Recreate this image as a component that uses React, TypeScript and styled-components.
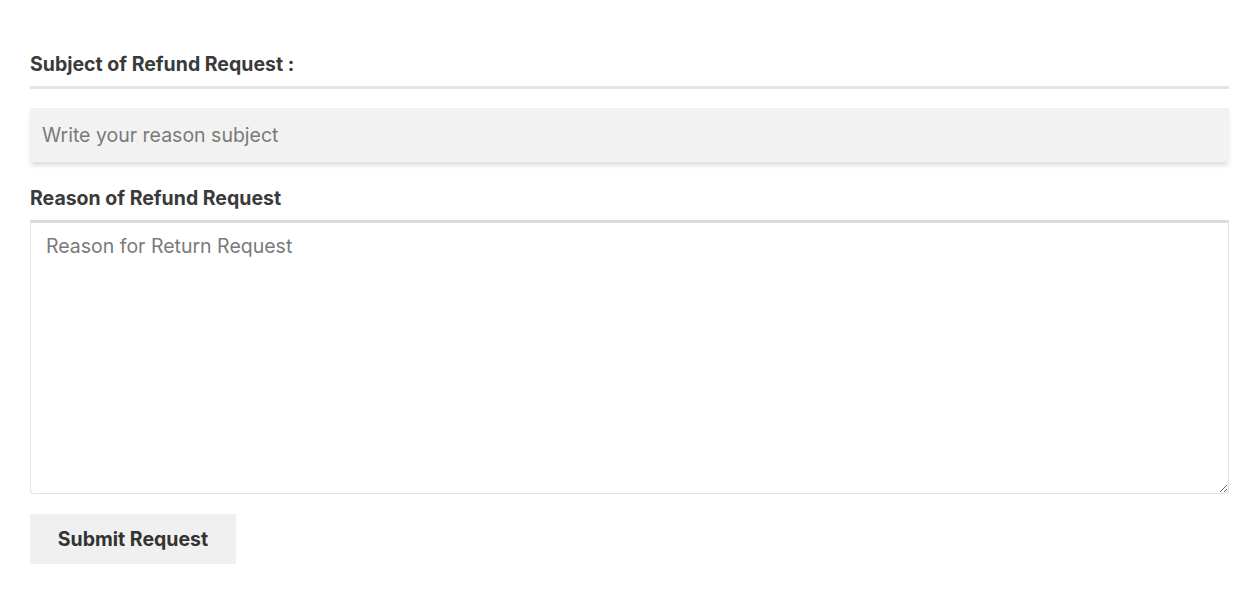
import React from 'react';
import styled, { createGlobalStyle } from 'styled-components';

const GlobalStyle = createGlobalStyle`
  html, body {
    margin: 0;
    padding: 0;
    background: #ffffff;
    font-family: Inter, "Liberation Sans", sans-serif;
  }
`;

const Page = styled.div`
  width: 1260px;
  height: 594px;
  box-sizing: border-box;
  padding: 52px 31px 0 30px;
  background: #ffffff;
`;

const Form = styled.form`
  display: flex;
  flex-direction: column;
`;

const Label = styled.label<{ underline?: boolean }>`
  display: block;
  font-size: 19.5px;
  font-weight: 700;
  color: #3a3a3a;
  line-height: 25px;
  padding-bottom: ${({ underline }) => (underline ? '9px' : '0')};
  margin-bottom: ${({ underline }) => (underline ? '19px' : '9px')};
  border-bottom: ${({ underline }) => (underline ? '3px solid #e4e4e4' : 'none')};
`;

const TextInput = styled.input`
  height: 54px;
  box-sizing: border-box;
  border: none;
  background: #f2f2f2;
  padding: 0 12px;
  font-family: inherit;
  font-size: 19.5px;
  color: #333;
  box-shadow: 0 4px 5px -1px rgba(0, 0, 0, 0.15);
  margin-bottom: 24px;
  outline: none;

  &::placeholder {
    color: #7a7a7a;
  }
`;

const TextArea = styled.textarea`
  height: 274px;
  box-sizing: border-box;
  border: 1px solid #e2e2e2;
  border-top: 3px solid #dcdcdc;
  border-radius: 0 0 4px 4px;
  padding: 11px 15px;
  font-family: inherit;
  font-size: 19.5px;
  line-height: 25px;
  color: #333;
  resize: vertical;
  outline: none;

  &::placeholder {
    color: #7a7a7a;
  }
`;

const Actions = styled.div`
  display: flex;
  margin-top: 20px;
`;

const SubmitButton = styled.button`
  width: 206px;
  height: 50px;
  border: none;
  background: #f0f0f0;
  font-family: inherit;
  font-size: 19.5px;
  font-weight: 700;
  color: #333;
  cursor: pointer;
`;

const App: React.FC = () => {
  return (
    <Page>
      <GlobalStyle />
      <Form onSubmit={(e) => e.preventDefault()}>
        <Label underline htmlFor="subject">Subject of Refund Request :</Label>
        <TextInput id="subject" placeholder="Write your reason subject" />
        <Label htmlFor="reason">Reason of Refund Request</Label>
        <TextArea id="reason" placeholder="Reason for Return Request" />
        <Actions>
          <SubmitButton type="submit">Submit Request</SubmitButton>
        </Actions>
      </Form>
    </Page>
  );
};

export default App;
